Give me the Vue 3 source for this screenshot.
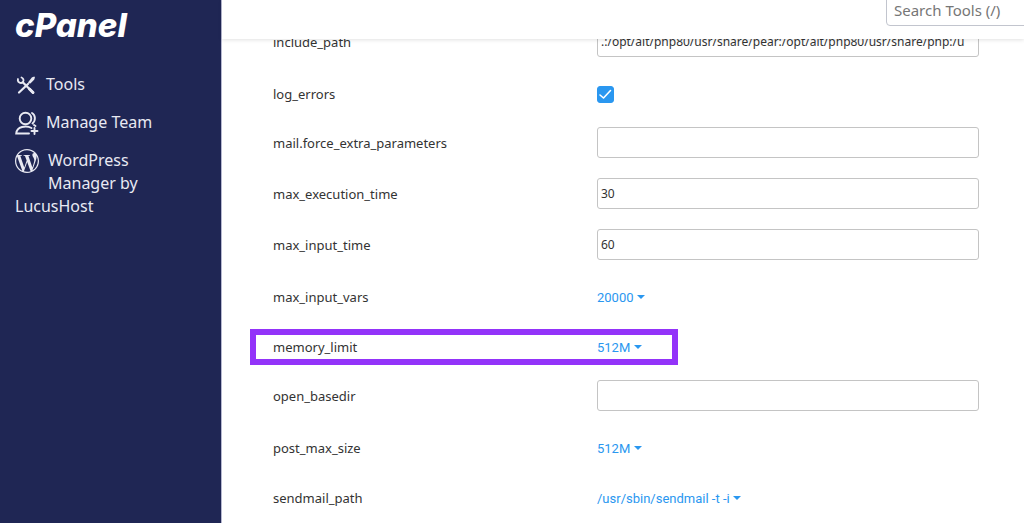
<script setup>
import { ref } from 'vue'

const rows = ref([
  { name: 'include_path', type: 'text', value: '.:/opt/alt/php80/usr/share/pear:/opt/alt/php80/usr/share/php:/u' },
  { name: 'log_errors', type: 'check', value: true },
  { name: 'mail.force_extra_parameters', type: 'text', value: '' },
  { name: 'max_execution_time', type: 'text', value: '30' },
  { name: 'max_input_time', type: 'text', value: '60' },
  { name: 'max_input_vars', type: 'select', value: '20000' },
  { name: 'memory_limit', type: 'select', value: '512M', marked: true },
  { name: 'open_basedir', type: 'text', value: '' },
  { name: 'post_max_size', type: 'select', value: '512M' },
  { name: 'sendmail_path', type: 'select', value: '/usr/sbin/sendmail -t -i' }
])
</script>

<template>
  <div class="page">
    <aside class="sidebar">
      <a class="logo" href="#">cPanel</a>
      <nav class="menu">
        <a class="item" href="#">
          <svg class="icon" viewBox="0 0 24 24" fill="none" stroke="currentColor" aria-hidden="true">
            <path d="M8 9.500 L18 19.500" stroke-width="2.200" stroke-linecap="round" />
            <path d="M3 6 a3 3 0 0 0 5 3 a3 3 0 0 0 -1.500 -4.500" stroke-width="1.800" stroke-linecap="round" />
            <path d="M4 19.500 L13 11" stroke-width="2.200" stroke-linecap="round" />
            <path d="M14 9.500 L17.500 5 L19 4.500 L18.500 6 L15 9.500 Z" stroke-width="1.800" stroke-linejoin="round" />
            <path d="M14.500 16 L18 19.500" stroke-width="3" stroke-linecap="round" />
          </svg>
          Tools
        </a>
        <a class="item" href="#">
          <svg class="icon" viewBox="0 0 24 24" fill="none" stroke="currentColor" stroke-width="1.900" stroke-linecap="round" aria-hidden="true">
            <circle cx="10.500" cy="7.500" r="5.800" />
            <path d="M17 2 c3.500 2 4 7.500 .500 10.500" />
            <path d="M14 22.500 H1.200 c.500 -7 10 -8.500 15.300 -5.500 M19 14 l1.500 1" />
            <path d="M19.500 17 V23 M16.500 20 H22.500" />
          </svg>
          Manage Team
        </a>
        <a class="item" href="#">
          <svg class="icon wp" viewBox="0 0 24 24" fill="currentColor" aria-hidden="true">
            <path d="M21.469 6.825c.84 1.537 1.318 3.3 1.318 5.175 0 3.979-2.156 7.456-5.363 9.325l3.295-9.527c.615-1.54.82-2.771.82-3.864 0-.405-.026-.78-.07-1.11m-7.981.105c.647-.03 1.232-.105 1.232-.105.582-.075.514-.93-.067-.899 0 0-1.755.135-2.88.135-1.064 0-2.85-.15-2.85-.15-.585-.03-.661.855-.075.885 0 0 .54.061 1.125.09l1.68 4.605-2.37 7.08L5.354 6.9c.649-.03 1.234-.1 1.234-.1.585-.075.516-.93-.065-.896 0 0-1.746.138-2.874.138-.2 0-.438-.008-.69-.015C4.911 3.15 8.235 1.215 12 1.215c2.809 0 5.365 1.072 7.286 2.833-.046-.003-.091-.009-.141-.009-1.06 0-1.812.923-1.812 1.914 0 .89.513 1.643 1.06 2.531.411.72.89 1.643.89 2.977 0 .915-.354 1.994-.821 3.479l-1.075 3.585-3.9-11.61.001.014zM12 22.784c-1.059 0-2.081-.153-3.048-.437l3.237-9.406 3.315 9.087c.024.053.05.101.078.149-1.12.393-2.325.609-3.582.609M1.211 12c0-1.564.336-3.05.935-4.39L7.29 21.709C3.694 19.96 1.212 16.271 1.211 12M12 0C5.385 0 0 5.385 0 12s5.385 12 12 12 12-5.385 12-12S18.615 0 12 0" />
          </svg>
          WordPress Manager by LucusHost
        </a>
      </nav>
    </aside>

    <main class="main">
      <header class="topbar">
        <input class="search" type="search" placeholder="Search Tools (/)" aria-label="Search Tools" />
      </header>
      <form class="options" @submit.prevent>
        <div v-for="row in rows" :key="row.name" class="row" :class="{ tall: row.type === 'text', marked: row.marked }">
          <label class="name" :for="row.name">{{ row.name }}</label>
          <input v-if="row.type === 'text'" :id="row.name" v-model="row.value" class="field" type="text" />
          <span v-else-if="row.type === 'check'" class="tick">
            <input :id="row.name" v-model="row.value" class="box" type="checkbox" />
            <svg class="mark" viewBox="0 0 17 17" fill="none" stroke="#fff" stroke-width="1.600" stroke-linecap="round" stroke-linejoin="round" aria-hidden="true">
              <path d="M3 9 L6.500 12 L13.500 4.500" />
            </svg>
          </span>
          <span v-else class="choice">
            <select :id="row.name" v-model="row.value" class="select">
              <option>{{ row.value }}</option>
            </select>
            <svg class="caret" viewBox="0 0 8 4" aria-hidden="true"><path d="M0 0 H8 L4 4 Z" fill="currentColor" /></svg>
          </span>
        </div>
      </form>
    </main>
  </div>
</template>

<style>
html, body { margin: 0; background: #fff; }
</style>

<style scoped>
.page {
  display: flex;
  height: 100vh;
  overflow: hidden;
  font-family: "Noto Sans", "Open Sans", sans-serif;
  color: #333;
}
.sidebar {
  box-sizing: border-box;
  flex: 0 0 222px;
  padding: 0 15px;
  background: #1f2654;
  border-right: 1px solid #b6b8d0;
}
.logo {
  display: block;
  height: 50px;
  line-height: 50px;
  font-family: Inter, sans-serif;
  font-size: 33px;
  font-weight: 800;
  font-style: italic;
  color: #fff;
  text-decoration: none;
}
.menu {
  display: flex;
  flex-direction: column;
  gap: 14px;
  padding: 23px 10px 0 0;
}
.item {
  display: block;
  font-size: 16px;
  line-height: 23px;
  color: #e8e9f2;
  text-decoration: none;
}
.icon {
  float: left;
  width: 24px;
  height: 24px;
  margin-right: 7px;
}
.wp { margin-right: 9px; }
.main {
  flex: 1;
  min-width: 0;
}
.topbar {
  position: relative;
  z-index: 1;
  display: flex;
  justify-content: flex-end;
  height: 39px;
  background: #fff;
  box-shadow: 0 1px 4px rgba(0, 0, 0, 0.12);
}
.search {
  box-sizing: border-box;
  width: 150px;
  height: 36px;
  margin: -10px -12px 0 0;
  padding: 3px 7px 0;
  border: 1px solid #c2c5ce;
  border-radius: 4px;
  background: #fff;
  font: 15px "Noto Sans", sans-serif;
  color: #333;
  outline: none;
}
.search::placeholder { color: #767676; opacity: 1; }
.options {
  margin-top: -13px;
  padding: 0 45px 0 51px;
}
.row {
  position: relative;
  display: grid;
  grid-template-columns: 324px 1fr;
  align-items: center;
  height: 34px;
  margin-bottom: 16px;
}
.tall {
  height: 31px;
  margin-bottom: 20px;
}
.marked::after {
  content: "";
  position: absolute;
  top: -1px;
  left: -23px;
  box-sizing: border-box;
  width: 428px;
  height: 36px;
  border: 6px solid #9333f9;
  pointer-events: none;
}
.name {
  font-size: 13px;
  line-height: 20px;
}
.field {
  box-sizing: border-box;
  width: 100%;
  height: 31px;
  padding: 0 3px;
  border: 1px solid #c4c4c4;
  border-radius: 3px;
  background: #fff;
  font: 12px "Noto Sans", sans-serif;
  color: #333;
  outline: none;
}
.tick {
  display: grid;
  width: 17px;
  height: 17px;
}
.box, .mark { grid-area: 1 / 1; }
.box {
  appearance: none;
  width: 17px;
  height: 17px;
  margin: 0;
  border-radius: 3px;
  background: #fff;
  border: 1px solid #2a97f0;
}
.box:checked { background: #2a97f0; }
.mark {
  width: 17px;
  height: 17px;
  pointer-events: none;
}
.choice {
  display: flex;
  align-items: center;
  gap: 3px;
  color: #2a97f0;
}
.select {
  appearance: none;
  margin: 0;
  padding: 0;
  border: 0;
  background: none;
  font: 13px Roboto, sans-serif;
  color: inherit;
  outline: none;
}
.caret {
  width: 8px;
  height: 4px;
}
</style>
